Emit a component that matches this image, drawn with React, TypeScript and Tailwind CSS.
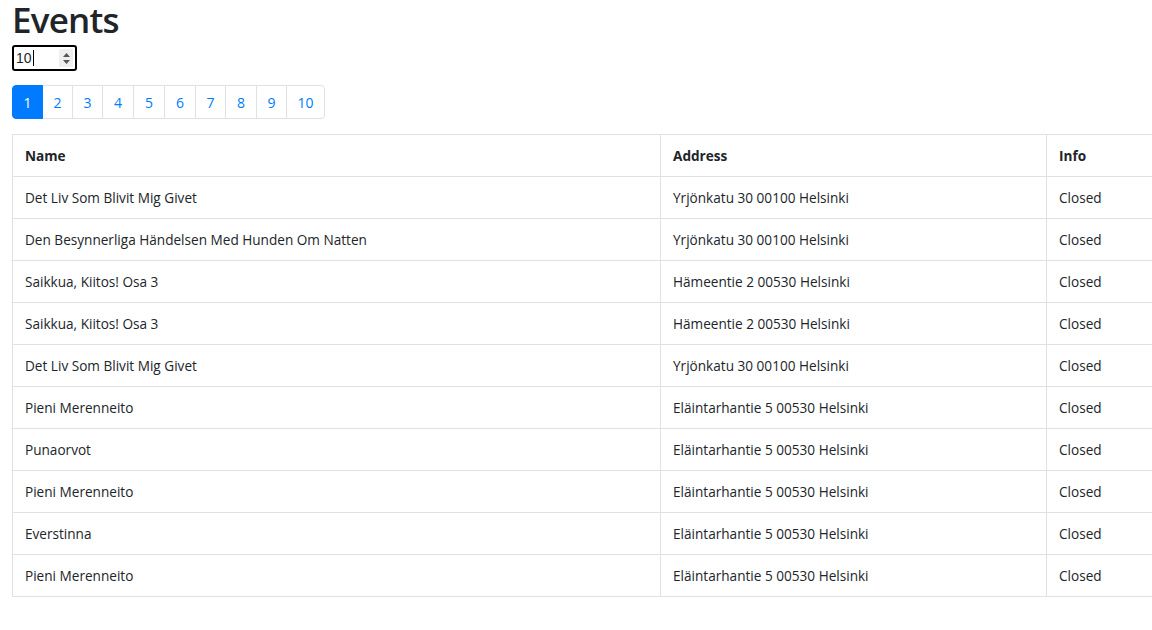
import React from 'react';

const events = [
  { name: 'Det Liv Som Blivit Mig Givet', address: 'Yrjönkatu 30 00100 Helsinki', info: 'Closed' },
  { name: 'Den Besynnerliga Händelsen Med Hunden Om Natten', address: 'Yrjönkatu 30 00100 Helsinki', info: 'Closed' },
  { name: 'Saikkua, Kiitos! Osa 3', address: 'Hämeentie 2 00530 Helsinki', info: 'Closed' },
  { name: 'Saikkua, Kiitos! Osa 3', address: 'Hämeentie 2 00530 Helsinki', info: 'Closed' },
  { name: 'Det Liv Som Blivit Mig Givet', address: 'Yrjönkatu 30 00100 Helsinki', info: 'Closed' },
  { name: 'Pieni Merenneito', address: 'Eläintarhantie 5 00530 Helsinki', info: 'Closed' },
  { name: 'Punaorvot', address: 'Eläintarhantie 5 00530 Helsinki', info: 'Closed' },
  { name: 'Pieni Merenneito', address: 'Eläintarhantie 5 00530 Helsinki', info: 'Closed' },
  { name: 'Everstinna', address: 'Eläintarhantie 5 00530 Helsinki', info: 'Closed' },
  { name: 'Pieni Merenneito', address: 'Eläintarhantie 5 00530 Helsinki', info: 'Closed' },
];

const pages = [
  { n: 1, w: 'w-[31px]' },
  { n: 2, w: 'w-[31px]' },
  { n: 3, w: 'w-[31px]' },
  { n: 4, w: 'w-[32px]' },
  { n: 5, w: 'w-[32px]' },
  { n: 6, w: 'w-[32px]' },
  { n: 7, w: 'w-[31px]' },
  { n: 8, w: 'w-[32px]' },
  { n: 9, w: 'w-[31px]' },
  { n: 10, w: 'w-[39px]' },
];

export default function App() {
  return (
    <div className="w-[1152px] h-[630px] overflow-hidden bg-white text-[#212529] font-['Open_Sans',sans-serif]">
      <div className="pl-3 pt-[2px]">
        {/* Title */}
        <h1 className="text-[35px] font-semibold leading-[36px] h-[43px] tracking-[-0.8px]">Events</h1>

        {/* Page size input */}
        <div className="w-[65px] h-[26px] border-2 border-black rounded-[3px] flex items-center pl-[2px] pr-[2px] font-['Liberation_Sans',sans-serif] text-[14px]">
          <span className="leading-none">10</span>
          <span className="w-px h-[16px] bg-black ml-[1px]" />
          <div className="ml-auto w-[14px] h-[18px] bg-[#efefef] flex flex-col items-center justify-center gap-[3px]">
            <svg width="7" height="4" viewBox="0 0 7 4"><path d="M3.5 0L7 4H0z" fill="#555" /></svg>
            <svg width="7" height="4" viewBox="0 0 7 4"><path d="M0 0h7L3.5 4z" fill="#555" /></svg>
          </div>
        </div>

        {/* Pagination */}
        <div className="flex mt-[14px] h-[34px] text-[14px]">
          {pages.map((p, i) => (
            <div
              key={p.n}
              className={
                p.w +
                ' h-[34px] flex items-center justify-center border ' +
                (i > 0 ? '-ml-px ' : '') +
                (i === 0 ? 'rounded-l-[4px] bg-[#007bff] border-[#007bff] text-white relative ' : 'border-[#dee2e6] text-[#007bff] ') +
                (i === pages.length - 1 ? 'rounded-r-[4px]' : '')
              }
            >
              {p.n}
            </div>
          ))}
        </div>

        {/* Table */}
        <table className="mt-[15px] border-collapse text-[13.6px] w-[1170px] table-fixed">
          <thead>
            <tr className="h-[42px]">
              <th className="w-[648px] border border-[#dee2e6] px-3 pt-[2px] text-left font-bold">Name</th>
              <th className="w-[386px] border border-[#dee2e6] px-3 pt-[2px] text-left font-bold">Address</th>
              <th className="border border-[#dee2e6] px-3 pt-[2px] text-left font-bold">Info</th>
            </tr>
          </thead>
          <tbody>
            {events.map((e, i) => (
              <tr key={i} className="h-[42px]">
                <td className="border border-[#dee2e6] px-3 pt-[2px]">{e.name}</td>
                <td className="border border-[#dee2e6] px-3 pt-[2px]">{e.address}</td>
                <td className="border border-[#dee2e6] px-3 pt-[2px]">{e.info}</td>
              </tr>
            ))}
          </tbody>
        </table>
      </div>
    </div>
  );
}
